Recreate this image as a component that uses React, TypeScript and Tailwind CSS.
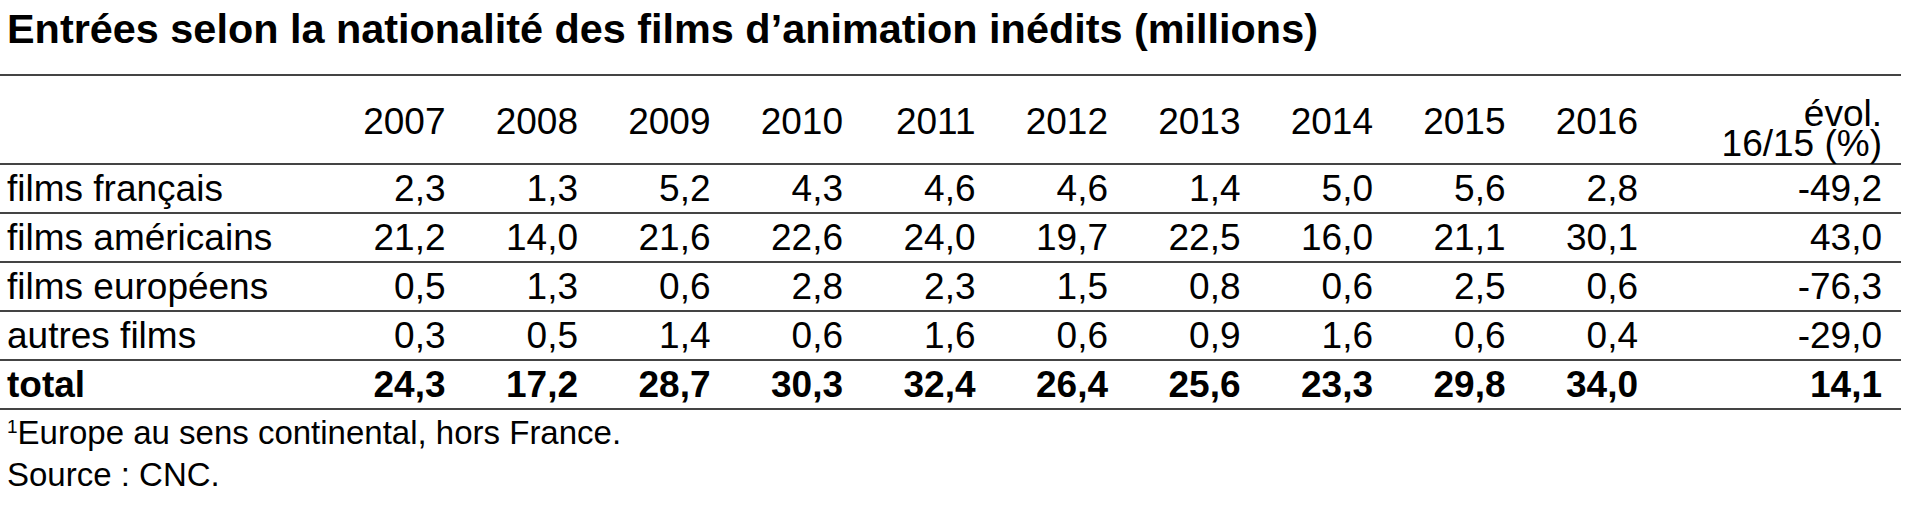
import React from "react";

const years = ["2007", "2008", "2009", "2010", "2011", "2012", "2013", "2014", "2015", "2016"];

const rows: { label: string; values: string[]; evol: string; bold?: boolean }[] = [
  { label: "films français", values: ["2,3", "1,3", "5,2", "4,3", "4,6", "4,6", "1,4", "5,0", "5,6", "2,8"], evol: "-49,2" },
  { label: "films américains", values: ["21,2", "14,0", "21,6", "22,6", "24,0", "19,7", "22,5", "16,0", "21,1", "30,1"], evol: "43,0" },
  { label: "films européens", values: ["0,5", "1,3", "0,6", "2,8", "2,3", "1,5", "0,8", "0,6", "2,5", "0,6"], evol: "-76,3" },
  { label: "autres films", values: ["0,3", "0,5", "1,4", "0,6", "1,6", "0,6", "0,9", "1,6", "0,6", "0,4"], evol: "-29,0" },
  { label: "total", values: ["24,3", "17,2", "28,7", "30,3", "32,4", "26,4", "25,6", "23,3", "29,8", "34,0"], evol: "14,1", bold: true },
];

export default function App() {
  return (
    <div className="w-[1916px] h-[508px] bg-white text-black overflow-hidden font-['Liberation_Sans',Arial,sans-serif]">
      <h1 className="pl-[7px] pt-[9px] text-[41.4px] leading-[40px] font-bold whitespace-nowrap">
        Entrées selon la nationalité des films d’animation inédits (millions)
      </h1>
      <div className="mt-[25px] w-[1901px] border-t-2 border-[#444] text-[37px]">
        <div className="grid grid-cols-[313px_repeat(10,132.5px)_1fr] h-[89px] border-b-2 border-[#444]">
          <div />
          {years.map((y) => (
            <div key={y} className="flex items-center justify-end pt-[4px] leading-[40px]">
              {y}
            </div>
          ))}
          <div className="pt-[23px] pr-[19px] text-right leading-[30px] whitespace-nowrap">
            <div>évol.</div>
            <div>16/15 (%)</div>
          </div>
        </div>
        {rows.map((r) => (
          <div
            key={r.label}
            className={`grid grid-cols-[313px_repeat(10,132.5px)_1fr] h-[49px] border-b-2 border-[#444] leading-[47px] whitespace-nowrap ${r.bold ? "font-bold" : ""}`}
          >
            <div className="pl-[7px]">{r.label}</div>
            {r.values.map((v, i) => (
              <div key={i} className="text-right">
                {v}
              </div>
            ))}
            <div className="pr-[19px] text-right">{r.evol}</div>
          </div>
        ))}
      </div>
      <div className="pt-[2px] pl-[7px] text-[33px] leading-[42px] whitespace-nowrap">
        <div>
          <span className="relative top-[5px] align-top text-[19px] leading-none">1</span>Europe au sens continental, hors France.
        </div>
        <div>Source : CNC.</div>
      </div>
    </div>
  );
}
